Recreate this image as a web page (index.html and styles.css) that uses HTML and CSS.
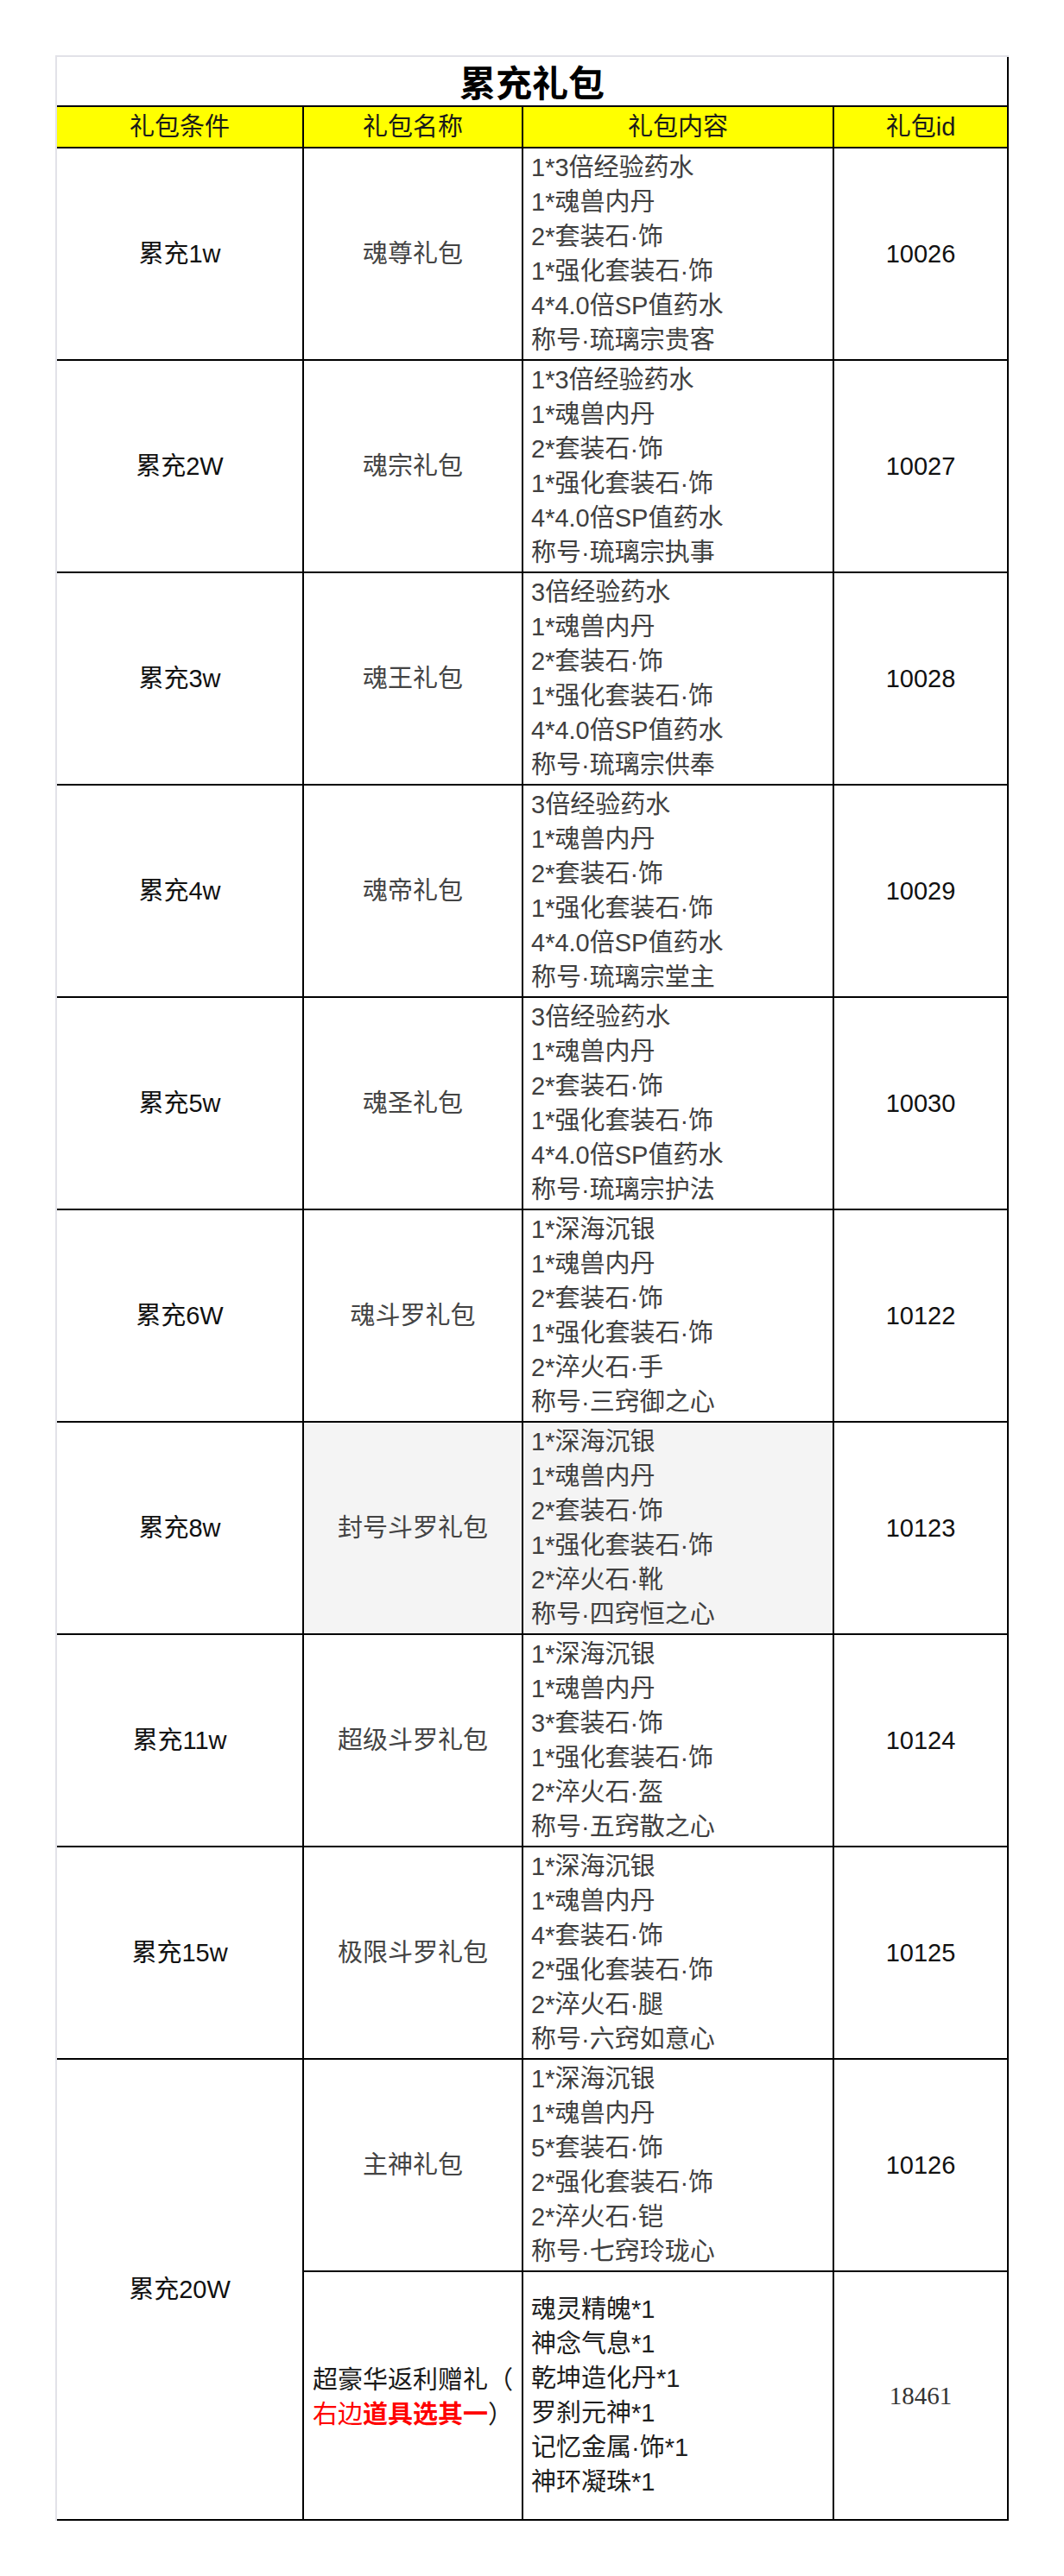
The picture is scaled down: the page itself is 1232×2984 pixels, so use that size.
FILE: index.html
```html
<!DOCTYPE html>
<html lang="zh-CN">
<head>
<meta charset="utf-8">
<title>累充礼包</title>
<link rel="stylesheet" href="styles.css">
</head>
<body>
<div class="page">
  <div class="sheet">
    <div class="cell title">累充礼包</div>

    <div class="cell head">礼包条件</div>
    <div class="cell head">礼包名称</div>
    <div class="cell head">礼包内容</div>
    <div class="cell head">礼包id</div>

    <div class="cell cond">累充1w</div>
    <div class="cell name">魂尊礼包</div>
    <div class="cell items">1*3倍经验药水<br>1*魂兽内丹<br>2*套装石·饰<br>1*强化套装石·饰<br>4*4.0倍SP值药水<br>称号·琉璃宗贵客</div>
    <div class="cell pid">10026</div>

    <div class="cell cond">累充2W</div>
    <div class="cell name">魂宗礼包</div>
    <div class="cell items">1*3倍经验药水<br>1*魂兽内丹<br>2*套装石·饰<br>1*强化套装石·饰<br>4*4.0倍SP值药水<br>称号·琉璃宗执事</div>
    <div class="cell pid">10027</div>

    <div class="cell cond">累充3w</div>
    <div class="cell name">魂王礼包</div>
    <div class="cell items">3倍经验药水<br>1*魂兽内丹<br>2*套装石·饰<br>1*强化套装石·饰<br>4*4.0倍SP值药水<br>称号·琉璃宗供奉</div>
    <div class="cell pid">10028</div>

    <div class="cell cond">累充4w</div>
    <div class="cell name">魂帝礼包</div>
    <div class="cell items">3倍经验药水<br>1*魂兽内丹<br>2*套装石·饰<br>1*强化套装石·饰<br>4*4.0倍SP值药水<br>称号·琉璃宗堂主</div>
    <div class="cell pid">10029</div>

    <div class="cell cond">累充5w</div>
    <div class="cell name">魂圣礼包</div>
    <div class="cell items">3倍经验药水<br>1*魂兽内丹<br>2*套装石·饰<br>1*强化套装石·饰<br>4*4.0倍SP值药水<br>称号·琉璃宗护法</div>
    <div class="cell pid">10030</div>

    <div class="cell cond">累充6W</div>
    <div class="cell name">魂斗罗礼包</div>
    <div class="cell items">1*深海沉银<br>1*魂兽内丹<br>2*套装石·饰<br>1*强化套装石·饰<br>2*淬火石·手<br>称号·三窍御之心</div>
    <div class="cell pid">10122</div>

    <div class="cell cond">累充8w</div>
    <div class="cell name shaded">封号斗罗礼包</div>
    <div class="cell items shaded">1*深海沉银<br>1*魂兽内丹<br>2*套装石·饰<br>1*强化套装石·饰<br>2*淬火石·靴<br>称号·四窍恒之心</div>
    <div class="cell pid">10123</div>

    <div class="cell cond">累充11w</div>
    <div class="cell name">超级斗罗礼包</div>
    <div class="cell items">1*深海沉银<br>1*魂兽内丹<br>3*套装石·饰<br>1*强化套装石·饰<br>2*淬火石·盔<br>称号·五窍散之心</div>
    <div class="cell pid">10124</div>

    <div class="cell cond">累充15w</div>
    <div class="cell name">极限斗罗礼包</div>
    <div class="cell items">1*深海沉银<br>1*魂兽内丹<br>4*套装石·饰<br>2*强化套装石·饰<br>2*淬火石·腿<br>称号·六窍如意心</div>
    <div class="cell pid">10125</div>

    <div class="cell cond span2">累充20W</div>
    <div class="cell name">主神礼包</div>
    <div class="cell items">1*深海沉银<br>1*魂兽内丹<br>5*套装石·饰<br>2*强化套装石·饰<br>2*淬火石·铠<br>称号·七窍玲珑心</div>
    <div class="cell pid">10126</div>

    <div class="cell bonus">超豪华返利赠礼（<br><span class="red">右边</span><span class="red strong">道具选其一</span>）</div>
    <div class="cell items dark">魂灵精魄*1<br>神念气息*1<br>乾坤造化丹*1<br>罗刹元神*1<br>记忆金属·饰*1<br>神环凝珠*1</div>
    <div class="cell pid serif">18461</div>
  </div>
</div>
</body>
</html>
```

FILE: styles.css
```css
html, body {
  margin: 0;
  padding: 0;
  background: #ffffff;
}

.page {
  padding: 64px 0 0 64px;
  font-family: "Liberation Sans", "Noto Sans CJK SC", sans-serif;
  font-size: 29px;
  line-height: 40px;
}

.sheet {
  display: grid;
  width: max-content;
  grid-template-columns: 284px 252px 358px 200px;
  grid-template-rows: 56px 46px repeat(10, 244px) 286px;
  gap: 2px;
  background: #000000;
  border-top: 2px solid #e2e2e8;
  border-left: 2px solid #e2e2e8;
  padding: 0 2px 2px 0;
}

.cell {
  background: #ffffff;
  display: flex;
  align-items: center;
  justify-content: center;
  text-align: center;
  color: #111111;
}

.title {
  grid-column: 1 / span 4;
  font-family: "Noto Sans CJK SC", sans-serif;
  font-weight: 700;
  font-size: 42px;
  line-height: 56px;
  color: #000000;
}

.head {
  background: #ffff00;
  color: #1a1a1a;
  line-height: 46px;
}

.cond {
  color: #111111;
}

.name {
  color: #444444;
}

.items {
  justify-content: flex-start;
  text-align: left;
  padding-left: 9px;
  color: #404040;
}

.items.dark {
  color: #1e1e1e;
}

.pid {
  color: #111111;
}

.serif {
  font-family: "Liberation Serif", "Noto Sans CJK SC", serif;
  color: #333333;
}

.shaded {
  background: #f4f4f4;
}

.span2 {
  grid-row: span 2;
}

.bonus {
  display: block;
  align-self: stretch;
  text-align: left;
  padding: 105px 0 0 10px;
  color: #1a1a1a;
}

.red {
  color: #ff0000;
}

.strong {
  font-weight: 700;
}
```
